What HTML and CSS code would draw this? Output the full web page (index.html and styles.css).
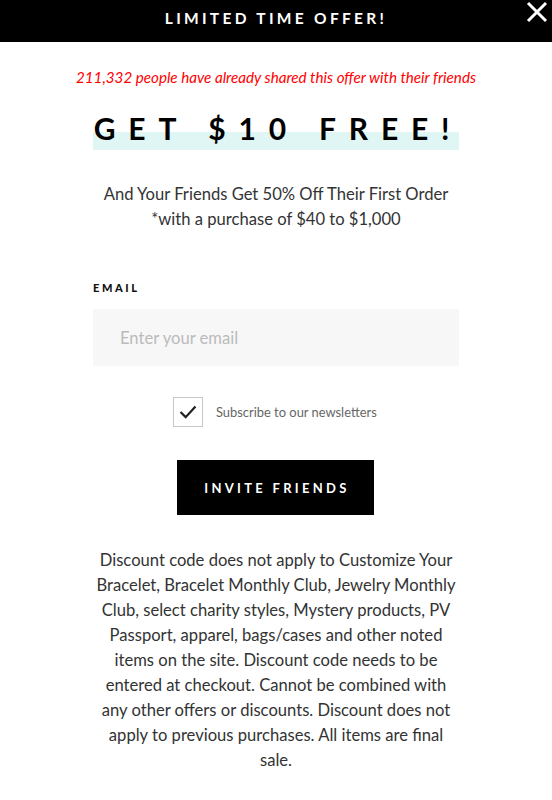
FILE: index.html
```html
<!DOCTYPE html>
<html>
<head>
<meta charset="utf-8">
<link rel="stylesheet" href="styles.css">
</head>
<body>
<div class="topbar">
  <span class="topbar-title">LIMITED TIME OFFER!</span>
  <svg class="close" width="22" height="22" viewBox="0 0 22 22"><path d="M2 2 L20 20 M20 2 L2 20" stroke="#fff" stroke-width="3" fill="none"/></svg>
</div>
<main class="content">
  <p class="shared">211,332 people have already shared this offer with their friends</p>
  <div class="headline-wrap">
    <h1 class="headline">GET $10 FREE!</h1>
  </div>
  <p class="sub">And Your Friends Get 50% Off Their First Order<br>*with a purchase of $40 to $1,000</p>
  <div class="form">
    <label class="label">EMAIL</label>
    <div class="input">Enter your email</div>
    <div class="check-row">
      <span class="checkbox"><svg width="30" height="30" viewBox="0 0 30 30"><path d="M7 15 L12.5 20.5 L23 9" stroke="#222" stroke-width="2.4" fill="none"/></svg></span>
      <span class="check-text">Subscribe to our newsletters</span>
    </div>
    <div class="btn-row"><button class="btn">INVITE FRIENDS</button></div>
  </div>
  <p class="disclaimer">Discount code does not apply to Customize Your Bracelet, Bracelet Monthly Club, Jewelry Monthly Club, select charity styles, Mystery products, PV Passport, apparel, bags/cases and other noted items on the site. Discount code needs to be entered at checkout. Cannot be combined with any other offers or discounts. Discount does not apply to previous purchases. All items are final sale.</p>
</main>
</body>
</html>
```
FILE: styles.css
```css
* { box-sizing: border-box; }
body {
  margin: 0;
  font-family: Lato, "Open Sans", sans-serif;
  background: #fff;
  color: #222;
}
.topbar {
  position: relative;
  height: 42px;
  background: #000;
  display: flex;
  align-items: center;
  justify-content: center;
}
.topbar-title {
  color: #fff;
  font-weight: 700;
  font-size: 15.5px;
  letter-spacing: 3.3px;
  margin-top: -6px;
}
.close {
  position: absolute;
  right: 4px;
  top: 1px;
}
.content {
  width: 366px;
  margin: 0 auto;
  display: flex;
  flex-direction: column;
  align-items: center;
}
.shared {
  margin: 26px -60px 0;
  color: #f00;
  font-style: italic;
  font-size: 15.2px;
  white-space: nowrap;
}
.headline-wrap {
  margin-top: 28px;
  width: 366px;
  height: 36px;
  background: linear-gradient(to bottom, transparent 0, transparent 18px, #e0f6f4 18px, #e0f6f4 36px);
  display: flex;
  justify-content: center;
}
.headline {
  margin: -8px 0 0 4px;
  font-size: 30px;
  font-weight: 700;
  letter-spacing: 12.8px;
  color: #000;
  line-height: 44px;
  white-space: nowrap;
}
.sub {
  margin: 32px 0 0;
  font-size: 16.6px;
  line-height: 25px;
  text-align: center;
  color: #333;
}
.form {
  margin-top: 49px;
  width: 366px;
  display: flex;
  flex-direction: column;
}
.label {
  font-size: 11px;
  font-weight: 900;
  letter-spacing: 2.6px;
  color: #111;
  line-height: 14px;
}
.input {
  margin-top: 14px;
  height: 57px;
  background: #f7f7f7;
  color: #bbb;
  font-size: 16.6px;
  padding-left: 27px;
  display: flex;
  align-items: center;
}
.check-row {
  margin-top: 31px;
  display: flex;
  align-items: center;
  padding-left: 80px;
}
.checkbox {
  width: 30px;
  height: 30px;
  border: 1px solid #c8c8c8;
  display: flex;
  align-items: center;
  justify-content: center;
}
.checkbox svg { display: block; }
.check-text {
  margin-left: 13px;
  font-size: 12.9px;
  color: #666;
}
.btn-row {
  margin-top: 33px;
  display: flex;
  padding-left: 84px;
}
.btn {
  width: 197px;
  height: 55px;
  background: #000;
  color: #fff;
  border: 0;
  font-family: Lato, sans-serif;
  font-weight: 700;
  font-size: 13px;
  letter-spacing: 3.3px;
  padding: 0 0 0 3px;
}
.disclaimer {
  margin: 33px 0 0;
  font-size: 16.6px;
  line-height: 25px;
  text-align: center;
  color: #333;
}
```
